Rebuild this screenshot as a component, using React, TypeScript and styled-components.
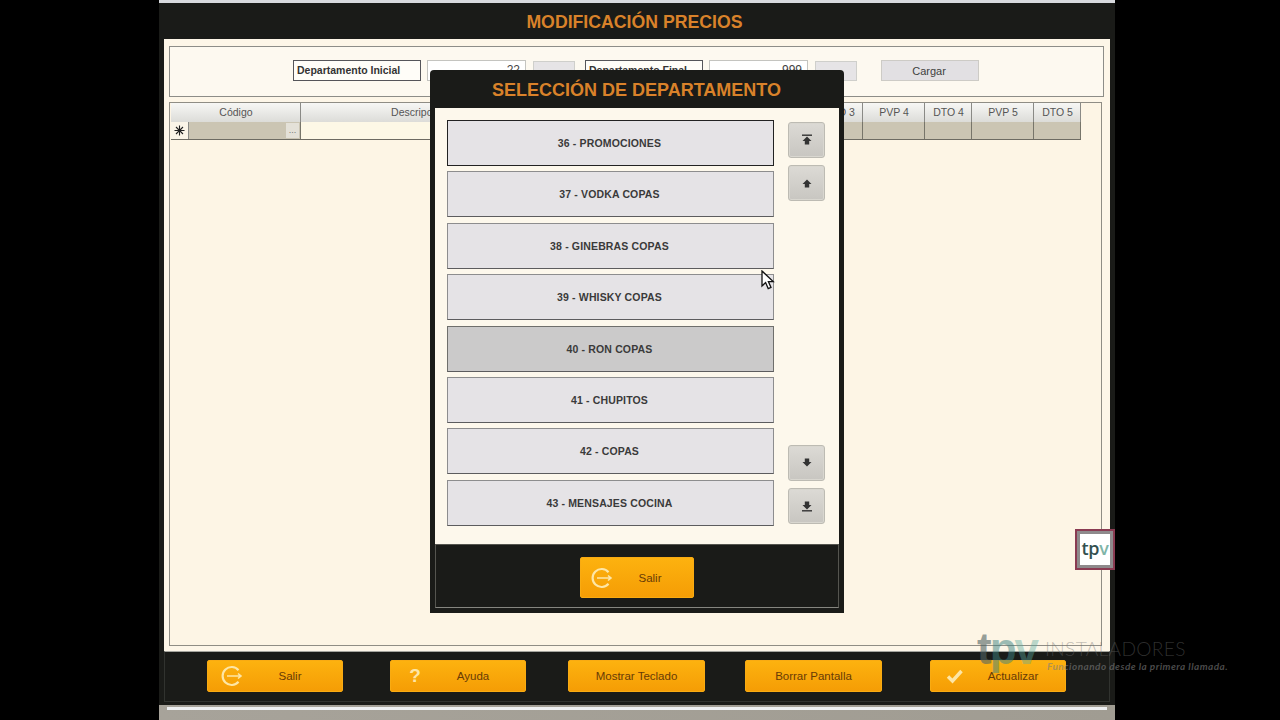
import React from "react";
import styled, { createGlobalStyle } from "styled-components";

const GlobalStyle = createGlobalStyle`
  html, body {
    margin: 0;
    padding: 0;
    background: #000;
    font-family: "Liberation Sans", Arial, sans-serif;
  }
`;

const Page = styled.div`
  position: relative;
  width: 1280px;
  height: 720px;
  overflow: hidden;
  background: #000;
  padding-left: 159px;
  box-sizing: border-box;
`;

const Screen = styled.div`
  position: relative;
  width: 956px;
  height: 720px;
  display: flex;
  flex-direction: column;
  background: linear-gradient(90deg, #a7a39a, #a09c92);
`;

const TopStrip = styled.div`
  height: 3px;
  background: #d8dade;
`;

const Win = styled.div`
  height: 702px;
  box-sizing: border-box;
  display: flex;
  flex-direction: column;
  background: #1a1b18;
  padding: 0 5px 3px;
`;

const TitleBar = styled.div`
  height: 36px;
  flex: none;
  display: flex;
  align-items: center;
  justify-content: center;
  color: #d9822a;
  font-size: 17.7px;
  font-weight: 700;
  padding: 2px 5px 0 0;
  box-sizing: border-box;
`;

const Content = styled.div`
  height: 612px;
  flex: none;
  box-sizing: border-box;
  background: #fdf6e8;
  padding: 7px 6px 5px 5px;
  display: flex;
  flex-direction: column;
  gap: 5px;
`;

const FilterPanel = styled.div`
  height: 51px;
  flex: none;
  box-sizing: border-box;
  border: 1px solid #8d8d88;
  background: #fdf9f0;
  display: flex;
  align-items: center;
  padding: 0 0 2px 123px;
`;

const FieldLabel = styled.div<{ $w: number }>`
  width: ${(p) => p.$w}px;
  height: 21px;
  box-sizing: border-box;
  border: 1px solid #55555a;
  background: #fffdf8;
  color: #333;
  font-size: 10.5px;
  font-weight: 700;
  line-height: 19px;
  padding-left: 3px;
  flex: none;
  white-space: nowrap;
  overflow: hidden;
`;

const NumInput = styled.div`
  width: 99px;
  height: 21px;
  margin-left: 6px;
  box-sizing: border-box;
  border: 1px solid #c4c4c0;
  background: #fff;
  color: #444;
  font-size: 12px;
  line-height: 18px;
  text-align: right;
  padding-right: 5px;
  flex: none;
`;

const PickBtn = styled.div`
  width: 42px;
  height: 20px;
  margin: 0 10px 0 7px;
  box-sizing: border-box;
  border: 1px solid #cfcfcb;
  background: #e6e4e6;
  flex: none;
`;

const LoadBtn = styled.div`
  width: 98px;
  height: 21px;
  margin-left: 14px;
  box-sizing: border-box;
  border: 1px solid #cdcbc6;
  background: #e2e0e3;
  color: #404040;
  font-size: 11px;
  line-height: 20px;
  padding-right: 2px;
  text-align: center;
  flex: none;
`;

const GridPanel = styled.div`
  flex: 1;
  margin-right: 2px;
  box-sizing: border-box;
  border: 1px solid #8f8d85;
  background: #fdf5e5;
  padding: 0 0 0 1px;
`;

const HeadRow = styled.div`
  display: grid;
  grid-template-columns: 130px 235px 62px 47px 62px 47px 62px 47px 62px 47px 62px 47px;
  height: 19px;
`;

const HeadCell = styled.div`
  box-sizing: border-box;
  border-right: 1px solid #8a8a86;
  background: linear-gradient(180deg, #f7f7f5, #dcdcd8);
  color: #555;
  font-size: 10.5px;
  line-height: 19px;
  padding-left: 1px;
  text-align: center;
`;

const DataRow = styled.div`
  display: grid;
  grid-template-columns: 18px 112px 235px 62px 47px 62px 47px 62px 47px 62px 47px 62px 47px;
  height: 17px;
  border-bottom: 1px solid #6d6b62;
  width: 910px;
`;

const Marker = styled.div`
  background: #fbf5e8;
  border-right: 1px solid #8a8a86;
  display: flex;
  align-items: center;
  justify-content: center;
`;

const DataCell = styled.div<{ $blank?: boolean }>`
  box-sizing: border-box;
  background: ${(p) => (p.$blank ? "#fdf8e6" : "#cbc5b3")};
  border-right: 1px solid #77756a;
  display: flex;
  justify-content: flex-end;
  align-items: center;
  padding-right: 1px;
`;

const Ellipsis = styled.span`
  width: 13px;
  height: 15px;
  background: #e4e1d8;
  color: #777;
  font-size: 9px;
  line-height: 15px;
  text-align: center;
`;

const Footer = styled.div`
  flex: 1;
  display: flex;
  align-items: flex-start;
  padding: 8px 0 0 42px;
  box-sizing: border-box;
  border: 1px solid #31332f;
  border-top-color: #a5a59e;
`;

const OrangeBtn = styled.div<{ $w?: number; $ml?: number; $h?: number }>`
  position: relative;
  width: ${(p) => p.$w ?? 136}px;
  height: ${(p) => p.$h ?? 32}px;
  margin-left: ${(p) => p.$ml ?? 0}px;
  flex: none;
  box-sizing: border-box;
  border-radius: 2px;
  background: linear-gradient(180deg, #fdb20f, #f59d05);
  border: 1px solid #f9ab12;
  color: #683b06;
  font-size: 11.5px;
  display: flex;
  align-items: center;
  justify-content: center;
`;

const BtnIcon = styled.span<{ $w?: number }>`
  width: ${(p) => p.$w ?? 50}px;
  flex: none;
  display: flex;
  justify-content: center;
  color: #fde6a6;
  font-size: 19px;
  font-weight: 700;
`;

const BtnText = styled.span<{ $w?: number }>`
  width: ${(p) => p.$w ?? 66}px;
  flex: none;
  text-align: center;
`;

const BtnSpacer = styled.span<{ $w?: number }>`
  width: ${(p) => p.$w ?? 20}px;
  flex: none;
`;

const BottomStrip = styled.div`
  margin: 2px 0 0 8px;
  width: 940px;
  height: 3px;
  background: #eef0f2;
`;

const Modal = styled.div`
  position: absolute;
  left: 271px;
  top: 70px;
  width: 414px;
  height: 543px;
  box-sizing: border-box;
  background: #1a1b18;
  border-radius: 4px 4px 0 0;
  display: flex;
  flex-direction: column;
  padding: 0 5px 5px;
`;

const ModalTitle = styled.div`
  height: 38px;
  flex: none;
  display: flex;
  align-items: center;
  justify-content: center;
  color: #d9822a;
  font-size: 18px;
  font-weight: 700;
  padding: 2px 1px 0 0;
  box-sizing: border-box;
`;

const ModalBody = styled.div`
  height: 436px;
  flex: none;
  box-sizing: border-box;
  background: #fdf8ec;
  padding: 12px 14px 0 12px;
  display: flex;
  justify-content: space-between;
`;

const ItemList = styled.div`
  width: 327px;
  display: flex;
  flex-direction: column;
  gap: 5.4px;
`;

const Item = styled.div<{ $active?: boolean; $focus?: boolean }>`
  height: 46px;
  flex: none;
  box-sizing: border-box;
  background: ${(p) => (p.$active ? "#cbcaca" : "#e5e3e6")};
  border: 1px solid ${(p) => (p.$focus ? "#222" : p.$active ? "#6f6f6c" : "#8d8d8e")};
  border-bottom-color: ${(p) => (p.$focus ? "#222" : "#5c5c5e")};
  color: #3a3a3a;
  font-size: 10.5px;
  font-weight: 700;
  letter-spacing: 0.15px;
  padding-right: 2px;
  display: flex;
  align-items: center;
  justify-content: center;
`;

const ScrollCol = styled.div`
  width: 37px;
  padding-top: 2px;
  display: flex;
  flex-direction: column;
  justify-content: space-between;
  height: 404px;
  box-sizing: border-box;
`;

const ScrollGroup = styled.div`
  display: flex;
  flex-direction: column;
  gap: 7px;
`;

const ScrollBtn = styled.div`
  width: 37px;
  height: 36px;
  box-sizing: border-box;
  border-radius: 3px;
  border: 1px solid #bdbbb3;
  background: linear-gradient(180deg, #dcdad5, #c8c6c1);
  box-shadow: inset 0 0 0 1px #d9d7d0;
  color: #333;
  display: flex;
  align-items: center;
  justify-content: center;
`;

const ModalFooter = styled.div`
  flex: 1;
  box-sizing: border-box;
  display: flex;
  justify-content: center;
  padding-top: 12px;
  border-top: 1px solid #55554f;
  border-bottom: 1px solid #85857f;
  border-left: 1px solid #55554f;
  border-right: 1px solid #55554f;
`;

const CornerBadge = styled.div`
  position: absolute;
  left: 916px;
  top: 529px;
  width: 40px;
  height: 41px;
  box-sizing: border-box;
  border: 2px solid #8a3b52;
  background: #fff;
  box-shadow: inset 0 0 0 3px #8e8a8c;
  color: #33504f;
  font-family: "Open Sans", sans-serif;
  font-size: 18px;
  font-weight: 600;
  line-height: 35px;
  text-align: center;
  letter-spacing: -0.3px;
`;

const BadgeV = styled.span`
  color: #7fb5a8;
`;

const Watermark = styled.div`
  position: absolute;
  left: 977px;
  top: 628px;
  display: flex;
  align-items: flex-start;
  pointer-events: none;
`;

const WmLogo = styled.div`
  width: 66px;
  font-size: 44px;
  font-weight: 700;
  line-height: 42px;
  letter-spacing: -2px;
  flex: none;
`;

const WmLetter = styled.span<{ $c: string }>`
  color: ${(p) => p.$c};
`;

const WmText = styled.div`
  display: flex;
  flex-direction: column;
  padding-top: 10px;
  margin-left: 2px;
`;

const WmTitle = styled.div`
  color: rgba(110, 110, 110, 0.42);
  font-family: Lato, sans-serif;
  font-size: 19.2px;
  font-weight: 300;
  line-height: 22px;
  letter-spacing: 0.3px;
  white-space: nowrap;
`;

const WmTag = styled.div`
  color: rgba(125, 125, 125, 0.6);
  font-family: Lato, sans-serif;
  font-size: 10px;
  font-weight: 700;
  font-style: italic;
  letter-spacing: 0.45px;
  padding-left: 2px;
  white-space: nowrap;
`;

const Cursor = styled.svg`
  position: absolute;
  left: 602px;
  top: 270px;
`;

const ExitIcon = () => (
  <svg width="22" height="22" viewBox="0 0 22 22" fill="none" stroke="currentColor" strokeWidth="2.2">
    <path d="M17.5 5.2A9 9 0 1 0 17.5 16.8" />
    <path d="M6 11H20M17 8.5l3 2.5-3 2.5" strokeWidth="1.6" />
  </svg>
);

const CheckIcon = () => (
  <svg width="18" height="16" viewBox="0 0 18 16" fill="none" stroke="currentColor" strokeWidth="3.4">
    <path d="M2 8.5l4.5 4.5L15.5 3" />
  </svg>
);

const StarIcon = () => (
  <svg width="11" height="11" viewBox="0 0 11 11" stroke="#222" strokeWidth="1.1">
    <path d="M5.5 0.5V10.5M0.5 5.5H10.5M2 2L9 9M9 2L2 9" />
  </svg>
);

const ArrowIcon = ({ down, bar }: { down?: boolean; bar?: boolean }) => (
  <svg width="12" height="12" viewBox="0 0 12 12" fill="currentColor" style={{ transform: down ? "rotate(180deg)" : undefined }}>
    {bar && <rect x="1" y="0.5" width="10" height="1.4" />}
    <path d="M6 2.5L10.5 7H8.2V10.5H3.8V7H1.5Z" />
  </svg>
);

const items = [
  "36 - PROMOCIONES",
  "37 - VODKA COPAS",
  "38 - GINEBRAS COPAS",
  "39 - WHISKY COPAS",
  "40 - RON COPAS",
  "41 - CHUPITOS",
  "42 - COPAS",
  "43 - MENSAJES COCINA",
];

const headers = ["Código", "Descripción", "PVP 1", "DTO 1", "PVP 2", "DTO 2", "PVP 3", "DTO 3", "PVP 4", "DTO 4", "PVP 5", "DTO 5"];

export default function App() {
  return (
    <Page>
      <GlobalStyle />
      <Screen>
        <TopStrip />
        <Win>
          <TitleBar>MODIFICACIÓN PRECIOS</TitleBar>
          <Content>
            <FilterPanel>
              <FieldLabel $w={128}>Departamento Inicial</FieldLabel>
              <NumInput>22</NumInput>
              <PickBtn />
              <FieldLabel $w={118}>Departamento Final</FieldLabel>
              <NumInput>999</NumInput>
              <PickBtn />
              <LoadBtn>Cargar</LoadBtn>
            </FilterPanel>
            <GridPanel>
              <HeadRow>
                {headers.map((h) => (
                  <HeadCell key={h}>{h}</HeadCell>
                ))}
              </HeadRow>
              <DataRow>
                <Marker>
                  <StarIcon />
                </Marker>
                <DataCell>
                  <Ellipsis>...</Ellipsis>
                </DataCell>
                <DataCell $blank />
                {headers.slice(2).map((h) => (
                  <DataCell key={h} />
                ))}
              </DataRow>
            </GridPanel>
          </Content>
          <Footer>
            <OrangeBtn>
              <BtnIcon>
                <ExitIcon />
              </BtnIcon>
              <BtnText>Salir</BtnText>
              <BtnSpacer />
            </OrangeBtn>
            <OrangeBtn $ml={47}>
              <BtnIcon>?</BtnIcon>
              <BtnText>Ayuda</BtnText>
              <BtnSpacer />
            </OrangeBtn>
            <OrangeBtn $w={137} $ml={42}>
              Mostrar Teclado
            </OrangeBtn>
            <OrangeBtn $w={137} $ml={40}>
              Borrar Pantalla
            </OrangeBtn>
            <OrangeBtn $ml={48}>
              <BtnIcon>
                <CheckIcon />
              </BtnIcon>
              <BtnText>Actualizar</BtnText>
              <BtnSpacer />
            </OrangeBtn>
          </Footer>
        </Win>
        <BottomStrip />

        <Modal>
          <ModalTitle>SELECCIÓN DE DEPARTAMENTO</ModalTitle>
          <ModalBody>
            <ItemList>
              {items.map((it, i) => (
                <Item key={it} $focus={i === 0} $active={it.startsWith("40")}>
                  {it}
                </Item>
              ))}
            </ItemList>
            <ScrollCol>
              <ScrollGroup>
                <ScrollBtn>
                  <ArrowIcon bar />
                </ScrollBtn>
                <ScrollBtn>
                  <ArrowIcon />
                </ScrollBtn>
              </ScrollGroup>
              <ScrollGroup>
                <ScrollBtn>
                  <ArrowIcon down />
                </ScrollBtn>
                <ScrollBtn>
                  <ArrowIcon down bar />
                </ScrollBtn>
              </ScrollGroup>
            </ScrollCol>
          </ModalBody>
          <ModalFooter>
            <OrangeBtn $w={114} $h={41}>
              <BtnIcon $w={44}>
                <ExitIcon />
              </BtnIcon>
              <BtnText $w={52}>Salir</BtnText>
              <BtnSpacer $w={18} />
            </OrangeBtn>
          </ModalFooter>
        </Modal>

        <CornerBadge>
          tp<BadgeV>v</BadgeV>
        </CornerBadge>
        <Cursor width="14" height="20" viewBox="0 0 14 20">
          <path d="M1 1V16L4.6 12.6L7.2 18.6L10 17.4L7.4 11.6H12.2Z" fill="#fff" stroke="#111" strokeWidth="1.3" />
        </Cursor>
      </Screen>

      <Watermark>
        <WmLogo>
          <WmLetter $c="rgba(80, 100, 100, 0.6)">t</WmLetter>
          <WmLetter $c="rgba(60, 130, 130, 0.5)">p</WmLetter>
          <WmLetter $c="rgba(90, 170, 160, 0.42)">v</WmLetter>
        </WmLogo>
        <WmText>
          <WmTitle>INSTALADORES</WmTitle>
          <WmTag>Funcionando desde la primera llamada.</WmTag>
        </WmText>
      </Watermark>
    </Page>
  );
}
